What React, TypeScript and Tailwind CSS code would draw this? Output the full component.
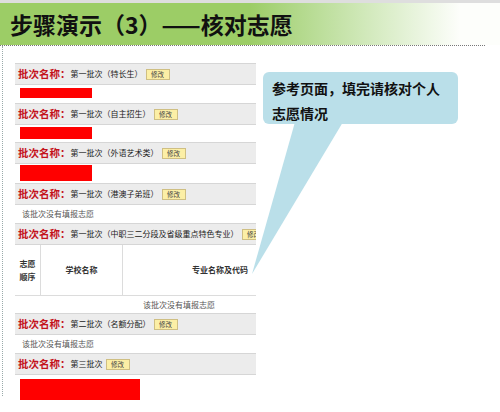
import React from "react";

const F = { fontFamily: '"Noto Sans CJK SC", "Noto Sans", sans-serif' };

function Header({ text }: { text: string }) {
  return (
    <div className="h-[22px] bg-[#ececec] border-y border-[#d6d6d6] flex items-center pl-[3px] whitespace-nowrap">
      <span className="text-[10.5px] font-bold text-[#c4121b] leading-none">批次名称：</span>
      <span className="text-[8px] text-[#222] leading-none">{text}</span>
      <span className="ml-[3px] h-[11px] w-[24px] shrink-0 bg-[#fcefa6] border border-[#cfbf83] text-[6.5px] text-[#444] flex items-center justify-center leading-none">修改</span>
    </div>
  );
}

function Red({ w, h, py }: { w: number; h: number; py: string }) {
  return (
    <div className={py + " pl-[5px]"}>
      <div className="bg-[#ff0000]" style={{ width: w, height: h }} />
    </div>
  );
}

function Note() {
  return (
    <div className="h-[18px] flex items-center pl-[7px] text-[8px] text-[#555] leading-none">该批次没有填报志愿</div>
  );
}

export default function App() {
  return (
    <div className="w-[500px] h-[412px] bg-white relative overflow-hidden" style={F}>
      <div className="h-[3px] bg-[#dedede]" />
      <div className="h-[42px] bg-linear-to-r from-[#9ccd66] from-50% to-[#fdfefb] to-92% flex items-center pl-[10px]">
        <span className="text-[23px] font-bold text-[#111] leading-none">步骤演示（3）——核对志愿</span>
      </div>
      <div className="w-[485px] border-b border-dotted border-[#777]" />
      <div className="ml-[2px] h-[350px] border-l border-dotted border-[#9aa] pl-[12px] pt-[17px]">
        <div className="w-[241px] overflow-hidden">
          <Header text="第一批次（特长生）" />
          <Red w={72} h={10} py="pt-[3px] pb-[5px]" />
          <Header text="第一批次（自主招生）" />
          <Red w={72} h={12} py="pt-[2px] pb-[3px]" />
          <Header text="第一批次（外语艺术类）" />
          <Red w={72} h={16} py="pt-[1px] pb-[2px]" />
          <Header text="第一批次（港澳子弟班）" />
          <Note />
          <Header text="第一批次（中职三二分段及省级重点特色专业）" />
          <div className="w-[241px]">
            <div className="flex h-[51px] border-b border-[#dcdcdc] text-[8px] font-bold text-[#333]">
              <div className="w-[26px] border-r border-[#dcdcdc] flex items-center justify-center text-center leading-[13px]">志愿<br />顺序</div>
              <div className="w-[82px] border-r border-[#dcdcdc] flex items-center justify-center">学校名称</div>
              <div className="flex-1 flex items-center pl-[69px] whitespace-nowrap">专业名称及代码</div>
            </div>
            <div className="h-[17px] flex items-center pl-[128px] text-[8px] text-[#555] leading-none">该批次没有填报志愿</div>
          </div>
          <Header text="第二批次（名额分配）" />
          <Note />
          <Header text="第三批次" />
          <Red w={120} h={21} py="pt-[4px]" />
        </div>
      </div>

      <svg className="absolute left-0 top-0" width="500" height="412" viewBox="0 0 500 412">
        <polygon points="295,122 343,122 252,274" fill="#badfe9" />
      </svg>
      <div className="absolute left-[263px] top-[72px] w-[195px] h-[52px] rounded-[6px] bg-[#badfe9] pl-[9px] pt-[4px] text-[14px] font-bold text-[#111] leading-[25px]">
        参考页面，填完请核对个人<br />志愿情况
      </div>
    </div>
  );
}
